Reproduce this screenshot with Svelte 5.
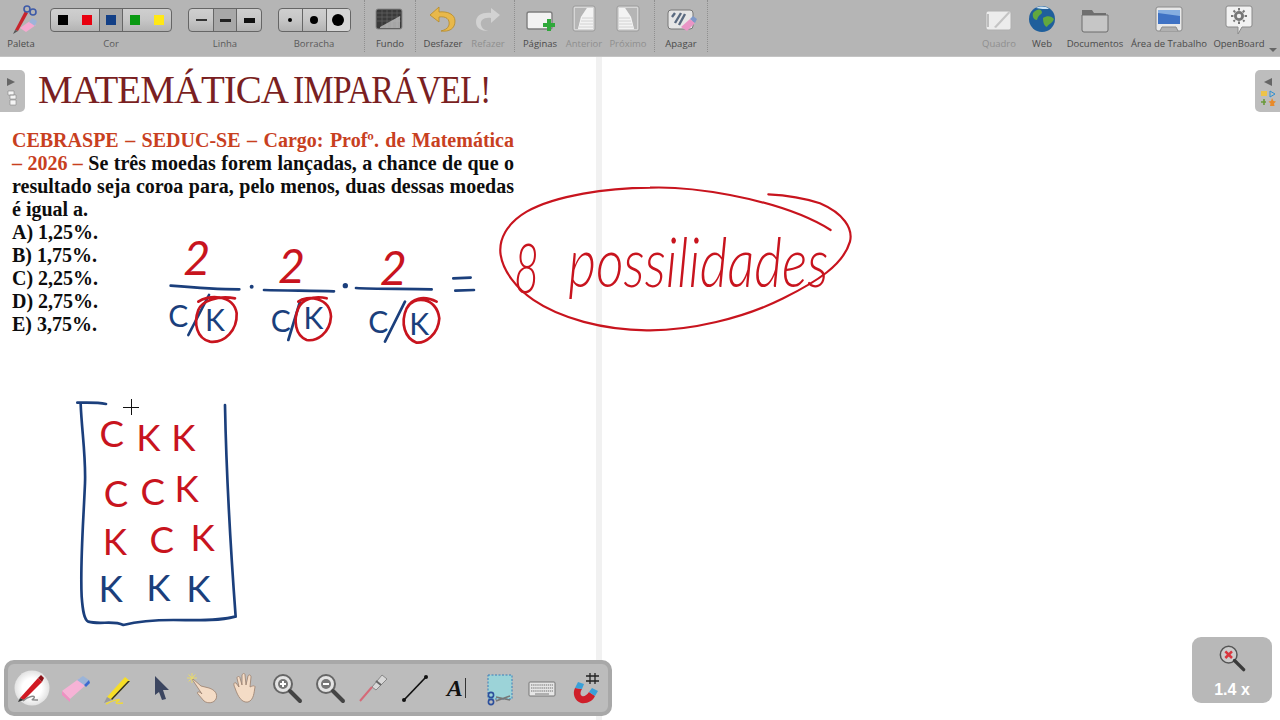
<script>
  const swatches1 = ['#000', '#e8000f'];
  const swatches3 = ['#0a9a12', '#ffe816'];
  const rows = [
    { cls: 'red', items: [['C', 155, 172], ['K', 265, 182], ['K', 370, 182]] },
    { cls: 'red', items: [['C', 168, 350], ['C', 278, 345], ['K', 380, 335]] },
    { cls: 'red', items: [['K', 165, 495], ['C', 305, 490], ['K', 428, 482]] },
    { cls: 'navy', items: [['K', 152, 635], ['K', 295, 632], ['K', 415, 636]] }
  ];
  const denoms = [[55, 290], [362, 305], [655, 310]];
  const ks = [[165, 303], [460, 298], [778, 315]];
  const twos = [[110, 135], [395, 160], [700, 165]];
</script>

<div class="app">
  <header class="bar">
    <div class="tool w42">
      <svg class="ic" viewBox="0 0 32 32">
        <path d="M10 27 L20 8 L23 10 L13 28Z" fill="#c8242c"/><path d="M10 27 L8 31 L13 28Z" fill="#555"/>
        <circle cx="22" cy="6" r="3" fill="none" stroke="#3d5aa8" stroke-width="1.6"/><circle cx="28" cy="9" r="3" fill="none" stroke="#3d5aa8" stroke-width="1.6"/>
        <path d="M15 25 L21 29 L31 22 L25 18Z" fill="#f4a9d0"/><path d="M24 19 L30 23 L32 18 L27 15Z" fill="#9db3d8"/>
      </svg>
      <span>Paleta</span>
    </div>
    <div class="tool w138">
      <div class="seg cor">
        <div class="cell c48">{#each swatches1 as c}<i class="sw" style:background={c}></i>{/each}</div>
        <div class="cell c22 on"><i class="sw" style:background="#123f86"></i></div>
        <div class="cell c48">{#each swatches3 as c}<i class="sw" style:background={c}></i>{/each}</div>
      </div>
      <span class="seglabel">Cor</span>
    </div>
    <div class="tool w90">
      <div class="seg">
        <div class="cell c24"><i class="ln l1"></i></div>
        <div class="cell c22 on"><i class="ln l2"></i></div>
        <div class="cell c24"><i class="ln l3"></i></div>
      </div>
      <span class="seglabel">Linha</span>
    </div>
    <div class="sec borr">
      <div class="tool w88">
        <div class="seg">
          <div class="cell c23"><i class="dot d1"></i></div>
          <div class="cell c23"><i class="dot d2"></i></div>
          <div class="cell c23 lit"><i class="dot d3"></i></div>
        </div>
        <span class="seglabel">Borracha</span>
      </div>
    </div>
    <div class="sec">
      <div class="tool w50">
        <svg class="ic" viewBox="0 0 32 32">
          <rect x="2" y="6" width="26" height="20" rx="2" fill="#3a3a3a" stroke="#8a8a8a"/>
          <path d="M3 10H27M3 14H27M3 18H27M8 7V25M13 7V25M18 7V25M23 7V25" stroke="#666" stroke-width=".7"/>
          <path d="M6 24 L26 13 V25 H6Z" fill="#c9c9c9" opacity=".75"/>
        </svg>
        <span>Fundo</span>
      </div>
    </div>
    <div class="sec pr8">
      <div class="tool w54">
        <svg class="ic" viewBox="0 0 32 32">
          <path d="M12 4 L3 12 L12 19 V14 C19 13 23 16 22 22 C21 26 17 27 14 28 C22 29 28 26 28 18 C28 11 20 8 12 9Z" fill="#e8b84a" stroke="#b58a2a" stroke-width=".8"/>
        </svg>
        <span>Desfazer</span>
      </div>
      <div class="tool w36 off">
        <svg class="ic" viewBox="0 0 32 32">
          <path d="M19 5 L28 12 L19 20 V15 C12 14 8 17 9 22 C10 26 13 27 16 28 C9 28 4 25 4 19 C4 12 11 9 19 10Z" fill="#d2d2d2"/>
        </svg>
        <span>Refazer</span>
      </div>
    </div>
    <div class="sec pg">
      <div class="tool w44">
        <svg class="ic" viewBox="0 0 32 32">
          <rect x="3" y="9" width="25" height="17" rx="2" fill="#f2f2f2" stroke="#7e7e7e" stroke-width="1.4"/>
          <path d="M24 19h4v4h4v4h-4v4h-4v-4h-4v-4h4z" fill="#2fa83a" transform="translate(-1 -3)"/>
        </svg>
        <span>Páginas</span>
      </div>
      <div class="tool w44 off">
        <svg class="ic" viewBox="0 0 32 32">
          <rect x="5" y="3" width="22" height="25" rx="2" fill="#d6d6d6" stroke="#9a9a9a"/>
          <path d="M7 5 H19 L13 14 L10 26 H7Z" fill="#b5b5b5"/>
          <path d="M19 5 H25 V26 H10 L13 14Z" fill="#f3f3f3"/>
          <path d="M14 15H25M13 18H25M12 21H25M11 24H25" stroke="#d2d2d2"/>
        </svg>
        <span>Anterior</span>
      </div>
      <div class="tool w44 off">
        <svg class="ic" viewBox="0 0 32 32">
          <rect x="5" y="3" width="22" height="25" rx="2" fill="#d6d6d6" stroke="#9a9a9a"/>
          <path d="M25 5 H13 L19 14 L22 26 H25Z" fill="#b5b5b5"/>
          <path d="M13 5 H7 V26 H22 L19 14Z" fill="#f3f3f3"/>
          <path d="M7 15H18M7 18H19M7 21H20M7 24H21" stroke="#d2d2d2"/>
        </svg>
        <span>Próximo</span>
      </div>
    </div>
    <div class="sec">
      <div class="tool w52">
        <svg class="ic" viewBox="0 0 32 32">
          <rect x="3" y="7" width="25" height="19" rx="3" fill="#e6e6e6" stroke="#777"/>
          <path d="M7 14 L10 10 M10 20 L16 10 M14 22 L20 11" stroke="#5a6a80" stroke-width="2.4"/>
          <path d="M16 24 L22 28 L30 20 L25 16Z" fill="#e995c6"/><path d="M25 16 L30 20 L32 16 L28 13Z" fill="#7f98c9"/>
        </svg>
        <span>Apagar</span>
      </div>
    </div>

    <div class="right">
      <div class="tool w44 off">
        <svg class="ic" viewBox="0 0 32 32">
          <rect x="3" y="8" width="25" height="19" rx="2" fill="#ececec" stroke="#b0b0b0"/>
          <path d="M5 11V24" stroke="#bdbdbd" stroke-width="2"/><path d="M11 24 L26 8 L27 10 L13 25Z" fill="#c4c4c4"/>
        </svg>
        <span>Quadro</span>
      </div>
      <div class="tool w42">
        <svg class="ic" viewBox="0 0 32 32">
          <circle cx="16" cy="16" r="13" fill="#1f5f9c"/>
          <path d="M7 10 C12 5 16 6 16 10 C14 12 12 13 11 17 C8 17 6 14 7 10Z M17 15 C21 12 26 13 28 16 C26 21 22 21 21 24 C18 23 17 19 17 15Z" fill="#62a83e"/>
          <path d="M10 5 C14 3 20 3 23 6 C19 6 14 6 10 5Z" fill="#cfe4f4"/>
        </svg>
        <span>Web</span>
      </div>
      <div class="tool w64">
        <svg class="ic" viewBox="0 0 32 32">
          <path d="M3 7 H13 L15 10 H27 V28 H3Z" fill="#6f6f6f"/>
          <path d="M3 12 H29 V27 Q29 29 27 29 H5 Q3 29 3 27Z" fill="#c6c6c6" stroke="#6c6c6c"/>
        </svg>
        <span>Documentos</span>
      </div>
      <div class="tool w84">
        <svg class="ic" viewBox="0 0 32 32">
          <rect x="3" y="4" width="26" height="24" rx="2" fill="#e8e8e8" stroke="#8a8a8a"/>
          <rect x="5" y="7" width="22" height="14" fill="#3f72c4"/><path d="M5 7 H27 V13 L5 10Z" fill="#86aee0"/>
          <path d="M7 28 L9 24 H23 L25 28" fill="#b0b0b0" stroke="#8a8a8a"/>
        </svg>
        <span>Área de Trabalho</span>
      </div>
      <div class="tool w56">
        <svg class="ic" viewBox="0 0 32 32">
          <path d="M5 3 H27 Q29 3 29 5 V22 Q29 24 27 24 H19 L15 31 V24 H5 Q3 24 3 22 V5 Q3 3 5 3Z" fill="#f2f2f2" stroke="#8a8a8a"/>
          <circle cx="16" cy="13" r="5" fill="#777"/><circle cx="16" cy="13" r="2.2" fill="#eee"/>
          <path d="M16 5V21M8 13H24M10.5 7.5L21.5 18.5M21.5 7.5L10.5 18.5" stroke="#777" stroke-width="2" stroke-dasharray="2.4 11.2"/>
        </svg>
        <span>OpenBoard</span>
      </div>
      <i class="caret"></i>
    </div>
  </header>

  <main class="board">
    <h1><span class="w1">MATEMÁTICA</span><span class="w2">IMPARÁVEL!</span></h1>
    <div class="q">
      <p class="just"><b class="or">CEBRASPE – SEDUC-SE – Cargo: Profº. de Matemática</b></p>
      <p class="just"><b class="or">– 2026 –</b> Se três moedas forem lançadas, a chance de que o</p>
      <p class="just">resultado seja coroa para, pelo menos, duas dessas moedas</p>
      <p>é igual a.</p>
      <p>A) 1,25%.</p>
      <p>B) 1,75%.</p>
      <p>C) 2,25%.</p>
      <p>D) 2,75%.</p>
      <p>E) 3,75%.</p>
    </div>
  </main>

  <div class="divider"></div>

  <svg class="ink" viewBox="0 0 1280 720">
    <g transform="translate(160 230) scale(.3333)">
      {#each twos as t}<text class="hw red two" x={t[0]} y={t[1]}>2</text>{/each}
      {#each denoms as d}<text class="hw navy small" x={d[0]} y={d[1]}>C</text>{/each}
      {#each ks as k}<text class="hw navy small" x={k[0]} y={k[1]}>K</text>{/each}
      <g class="st navyS">
        <path d="M32 167C90 172 170 178 238 178M312 180C380 182 460 182 522 184M588 174C650 178 750 175 815 178"/>
        <path d="M880 145L932 143M886 182L942 180"/>
        <path d="M147 195L85 315M420 215L385 330M735 215L675 335"/>
      </g>
      <circle cx="275" cy="170" r="6" class="fillNavy"/><circle cx="556" cy="167" r="8" class="fillNavy"/>
      <g class="st redS">
        <path d="M115 215C140 195 220 190 230 250C232 300 195 340 150 335C110 325 100 280 115 240C125 215 170 195 225 205"/>
        <path d="M415 215C440 195 510 200 513 260C510 310 470 335 440 330C405 315 400 270 415 235C425 210 460 195 500 205"/>
        <path d="M740 235C760 195 830 200 838 265C835 315 795 340 770 338C735 325 720 280 740 235C755 205 790 195 830 215"/>
      </g>
    </g>

    <g transform="translate(490 175) scale(.3333)">
      <path class="st redS thin" d="M1022 165C950 120 850 85 720 60C640 45 560 35 480 38C350 40 200 60 110 110C50 145 25 195 32 240C40 290 80 340 130 375C210 430 340 465 470 466C600 468 760 430 880 370C980 320 1060 270 1080 200C1090 160 1060 115 990 85C940 68 880 60 835 58"/>
      <text class="hw red word" x="72" y="355" textLength="75" lengthAdjust="spacingAndGlyphs">8</text>
      <text class="hw red word" x="235" y="335" textLength="780" lengthAdjust="spacingAndGlyphs">possilidades</text>
    </g>

    <g transform="translate(60 390) scale(.3333)">
      <path class="st navyS" d="M52 38C80 38 110 36 138 42M62 42C65 120 78 200 75 280C70 400 60 520 65 620C68 660 72 690 85 695C120 705 160 690 190 705C230 695 280 690 340 690C400 690 470 695 525 680M495 45C498 200 510 450 527 680"/>
      {#each rows as r}
        {#each r.items as it}
          <text class="hw letter {r.cls}" x={it[1]} y={it[2]}>{it[0]}</text>
        {/each}
      {/each}
    </g>
    <path d="M131.5 399V415M123 407.5H139" stroke="#111" stroke-width="1" fill="none"/>
  </svg>

  <aside class="tab tleft">
    <svg viewBox="0 0 25 42">
      <path d="M7 8L15 12L7 16Z" fill="#666"/>
      <path d="M8 21H14V25H8ZM10 25H16V29H10ZM10 30H16V35H10Z" fill="#f4f4f4" stroke="#888" stroke-width=".6"/>
    </svg>
  </aside>
  <aside class="tab tright">
    <svg viewBox="0 0 25 42">
      <path d="M17 8L9 12L17 16Z" fill="#666"/>
      <rect x="6" y="21" width="6" height="5" fill="#eec34a"/><path d="M15 21L20 24L15 27Z" fill="none" stroke="#2f8fd0"/>
      <path d="M6 32H11M9 29V35" stroke="#6a9a3a" stroke-width="1.6"/><path d="M17 28L18.5 31L21 31.5L19 33.5L19.5 36H15L15.5 33.5L13.5 31.5L16 31Z" fill="#e88a2a"/>
    </svg>
  </aside>

  <nav class="dock">
    <div class="dk">
      <svg viewBox="0 0 36 36">
        <defs><radialGradient id="halo"><stop offset="0.55" stop-color="#fff"/><stop offset="1" stop-color="#e2e2e2"/></radialGradient></defs>
        <circle cx="18" cy="18" r="17.5" fill="url(#halo)"/>
        <path d="M6 28L24 8L28 12L10 30Z" fill="#d11922"/><path d="M24 8L27 5L30 8L28 12Z" fill="#8c1218"/>
        <path d="M6 28L4 32L10 30Z" fill="#333"/>
        <path d="M9 31C14 26 22 25 20 28C18 30 16 30 24 30" fill="none" stroke="#888" stroke-width="1.4"/>
      </svg>
    </div>
    <div class="dk">
      <svg viewBox="0 0 36 36">
        <path d="M5 21L23 8L31 13L13 29Z" fill="#f6b3d6"/><path d="M5 21L13 29V32L5 25Z" fill="#f08fc2"/>
        <path d="M20 10L26 6L32 10L27 15Z" fill="#9bb4d8"/><path d="M27 15L32 10L33 13L29 17Z" fill="#3b6bd0"/>
      </svg>
    </div>
    <div class="dk">
      <svg viewBox="0 0 36 36">
        <path d="M8 27L26 7L31 11L13 30Z" fill="#f7de26"/><path d="M12 29L29 11L31 11L13 30Z" fill="#2a2a2a"/>
        <path d="M8 27L5 33L13 30Z" fill="#9a9a9a"/>
        <path d="M7 34C14 30 24 28 19 31C15 33 18 34 24 33" fill="none" stroke="#f0d93a" stroke-width="1.5"/>
      </svg>
    </div>
    <div class="dk">
      <svg viewBox="0 0 36 36">
        <path d="M13 6L27 20H21L24 29L20 30L17 22L13 25Z" fill="#3c4660"/>
      </svg>
    </div>
    <div class="dk">
      <svg viewBox="0 0 36 36">
        <path d="M8 3V13M3 8H13M4.5 4.5L11.5 11.5M11.5 4.5L4.5 11.5" stroke="#e8d96a" stroke-width="1"/>
        <path d="M9 9L17 16L25 18C31 20 34 24 32 29C30 33 24 34 20 31L14 24C12 22 15 21 17 23L18 24L10 12C9 10 8 10 9 9Z" fill="#f4dcc6" stroke="#9a7f6c" stroke-width=".8"/>
      </svg>
    </div>
    <div class="dk">
      <svg viewBox="0 0 36 36">
        <path d="M8 18C6 14 7 12 9 13L12 17L10 8C10 6 13 6 13 8L15 15L15 5C16 3 18 3 18 5L19 15L21 6C22 4 24 5 24 7L23 17C25 16 28 15 28 17C27 22 27 30 21 32C15 33 11 27 8 18Z" fill="#f4dcc6" stroke="#9a7f6c" stroke-width=".8"/>
      </svg>
    </div>
    <div class="dk">
      <svg viewBox="0 0 36 36">
        <circle cx="14" cy="14" r="9" fill="#e4e4e4" stroke="#666" stroke-width="2"/>
        <path d="M21 21L31 31" stroke="#444" stroke-width="4" stroke-linecap="round"/>
        <circle cx="14" cy="14" r="5" fill="#777"/><path d="M14 11V17M11 14H17" stroke="#fff" stroke-width="2"/>
      </svg>
    </div>
    <div class="dk">
      <svg viewBox="0 0 36 36">
        <circle cx="14" cy="14" r="9" fill="#e4e4e4" stroke="#666" stroke-width="2"/>
        <path d="M21 21L31 31" stroke="#444" stroke-width="4" stroke-linecap="round"/>
        <circle cx="14" cy="14" r="5" fill="#777"/><path d="M11 14H17" stroke="#fff" stroke-width="2"/>
      </svg>
    </div>
    <div class="dk">
      <svg viewBox="0 0 36 36">
        <path d="M18 17L28 5L33 9L22 20Z" fill="#d8d8d8" stroke="#777" stroke-width=".8"/>
        <path d="M22 11L27 15" stroke="#666" stroke-width="2"/>
        <path d="M18 17L6 31" stroke="#d56a78" stroke-width="2"/>
      </svg>
    </div>
    <div class="dk">
      <svg viewBox="0 0 36 36">
        <path d="M7 30L29 7" stroke="#111" stroke-width="1.7"/>
        <circle cx="7" cy="30" r="2" fill="#111"/><circle cx="29" cy="7" r="2" fill="#111"/>
      </svg>
    </div>
    <div class="dk"><span class="atext">A</span><i class="caretline"></i></div>
    <div class="dk">
      <svg viewBox="0 0 36 36">
        <rect x="6" y="5" width="24" height="24" fill="#9cd3d8" stroke="#3b7fb8" stroke-dasharray="2 1.5"/>
        <path d="M14 27L28 30M14 31L28 26" stroke="#777" stroke-width="1.6"/>
        <circle cx="9" cy="25" r="2.6" fill="none" stroke="#2c4f9c" stroke-width="1.6"/><circle cx="9" cy="32" r="2.6" fill="none" stroke="#2c4f9c" stroke-width="1.6"/>
      </svg>
    </div>
    <div class="dk">
      <svg viewBox="0 0 36 36">
        <rect x="5" y="12" width="26" height="14" rx="1" fill="#e6e6e6" stroke="#777"/>
        <path d="M7 15H29M7 18H29M7 21H29" stroke="#999" stroke-width="1.4" stroke-dasharray="1.4 .7"/>
        <path d="M11 24H25" stroke="#999" stroke-width="1.4"/>
      </svg>
    </div>
    <div class="dk">
      <svg viewBox="0 0 36 36">
        <path d="M8 18C5 24 8 31 14 33C20 34 26 31 28 26L22 22C20 25 17 27 15 26C13 25 13 22 15 19Z" fill="#cf1f2a"/>
        <path d="M8 18L15 19L17 14L11 12Z" fill="#3aa0d8"/><path d="M22 22L28 26L31 21L25 18Z" fill="#3aa0d8"/>
        <path d="M23 3V14M28 3V14M19 6H32M19 11H32" stroke="#222" stroke-width="1.3"/>
      </svg>
    </div>
  </nav>

  <aside class="zoombox">
    <svg viewBox="0 0 36 36">
      <circle cx="14" cy="14" r="10" fill="#ccc" stroke="#555" stroke-width="1.8"/>
      <path d="M21 21L32 32" stroke="#3a3a3a" stroke-width="4" stroke-linecap="round"/>
      <path d="M10 10L18 18M18 10L10 18" stroke="#d9363e" stroke-width="3"/>
    </svg>
    <span>1.4 x</span>
  </aside>
</div>

<style>
  :global(body) { margin: 0; background: #fff; }
  .app { position: relative; width: 1280px; height: 720px; overflow: hidden; background: #fff; font-family: "Open Sans", "Liberation Sans", sans-serif; }

  .bar { display: flex; height: 56px; background: #b5b5b5; border-bottom: 1px solid #c4c4c4; }
  .sec { display: flex; border-right: 1px dotted #8f8f8f; margin-bottom: 4px; }
  .borr { padding-right: 6px; }
  .pr8 { padding-right: 8px; }
  .pg { padding: 0 4px 0 3px; }
  .right { display: flex; margin-left: auto; padding-right: 13px; align-items: flex-start; position: relative; }

  .tool { display: flex; flex-direction: column; align-items: center; padding-top: 3px; font-size: 9.5px; color: #4a4a4a; flex: none; white-space: nowrap; }
  .tool span { display: block; margin-top: 3px; line-height: 12px; }
  .tool .seglabel { margin-top: 6px; color: #5a5a5a; }
  .off { color: #8f8f8f; }
  .ic { width: 32px; height: 32px; display: block; }
  .w36 { width: 36px; } .w42 { width: 42px; } .w44 { width: 44px; } .w50 { width: 50px; } .w52 { width: 52px; }
  .w54 { width: 54px; } .w56 { width: 56px; } .w64 { width: 64px; } .w84 { width: 84px; } .w88 { width: 88px; }
  .w90 { width: 90px; } .w138 { width: 138px; }

  .seg { display: flex; height: 22px; margin-top: 5px; border: 1px solid #666; border-radius: 4px; overflow: hidden; background: linear-gradient(#cfcfcf, #c6c6c6 50%, #b3b3b3); }
  .cell { display: flex; align-items: center; justify-content: space-around; border-left: 1px solid #666; }
  .cell:first-child { border-left: 0; }
  .on { background: #a8a8a8; }
  .lit { background: #d6d6d6; }
  .c22 { width: 22px; } .c23 { width: 23px; } .c24 { width: 24px; } .c48 { width: 48px; }
  .sw { width: 10px; height: 10px; display: block; }
  .ln { width: 11px; display: block; background: #333; }
  .l1 { height: 1.5px; } .l2 { height: 3px; background: #222; } .l3 { height: 5px; background: #111; }
  .dot { display: block; border-radius: 50%; background: #000; }
  .d1 { width: 4px; height: 4px; } .d2 { width: 8px; height: 8px; } .d3 { width: 12px; height: 12px; }
  .caret { position: absolute; right: 3px; top: 48px; width: 0; height: 0; border: 4px solid transparent; border-top-color: #666; border-bottom: 0; }

  .board { padding: 10px 0 0 12px; }
  h1 { margin: 0 0 16px 26px; height: 46px; display: flex; font: 400 39px/46px "Liberation Serif", serif; color: #7a1f22; white-space: nowrap; }
  .w1 { letter-spacing: -1px; margin-right: 5px; }
  .w2 { letter-spacing: -1px; transform: scaleX(.87); transform-origin: left; }
  .q { width: 502px; font: 700 20px/23px "Liberation Serif", serif; color: #0d0d0d; }
  .q p { margin: 0; white-space: nowrap; }
  .q .just { white-space: normal; text-align: justify; text-align-last: justify; }
  .or { color: #c8401f; }

  .divider { position: absolute; left: 596px; top: 57px; width: 6px; bottom: 0; background: #f1f1f1; }

  .ink { position: absolute; inset: 0; width: 1280px; height: 720px; pointer-events: none; }
  .st { fill: none; stroke-width: 8; stroke-linecap: round; stroke-linejoin: round; }
  .thin { stroke-width: 6.5; }
  .navyS { stroke: #1b3f7c; }
  .redS { stroke: #c8141e; }
  .fillNavy { fill: #1b3f7c; }
  .hw { font-family: Lato, "Open Sans", sans-serif; font-weight: 400; font-style: italic; }
  .hw.red { fill: #c8141e; }
  .hw.navy { fill: #1b3f7c; }
  .letter { font-size: 110px; text-anchor: middle; font-style: normal; }
  .small { font-size: 90px; text-anchor: middle; font-style: normal; }
  .two { font-size: 140px; text-anchor: middle; }
  .word { font-size: 210px; font-weight: 300; }

  .tab { position: absolute; top: 70px; width: 25px; height: 42px; background: #bdbdbd; }
  .tab svg { display: block; width: 25px; height: 42px; }
  .tleft { left: 0; border-radius: 0 5px 5px 0; }
  .tright { right: 0; border-radius: 5px 0 0 5px; }

  .dock { position: absolute; left: 4px; top: 660px; box-sizing: border-box; width: 608px; height: 56px; display: flex; align-items: center; padding-left: 3px; background: #bcbcbc; border: 4px solid #a8a8a8; border-radius: 10px; }
  .dk { position: relative; width: 42.5px; height: 36px; flex: none; display: flex; align-items: center; justify-content: center; }
  .dk svg { width: 36px; height: 36px; display: block; }
  .atext { font: italic 700 24px/36px "Liberation Serif", serif; color: #111; margin-right: 5px; }
  .caretline { position: absolute; left: 29px; top: 8px; width: 1px; height: 20px; background: #333; }

  .zoombox { position: absolute; left: 1192px; top: 637px; width: 80px; height: 66px; box-sizing: border-box; padding-top: 6px; background: #b8b8b8; border-radius: 9px; display: flex; flex-direction: column; align-items: center; color: #fff; font: 700 16px/18px "Liberation Sans", sans-serif; }
  .zoombox svg { width: 30px; height: 30px; display: block; margin-bottom: 8px; }
</style>
